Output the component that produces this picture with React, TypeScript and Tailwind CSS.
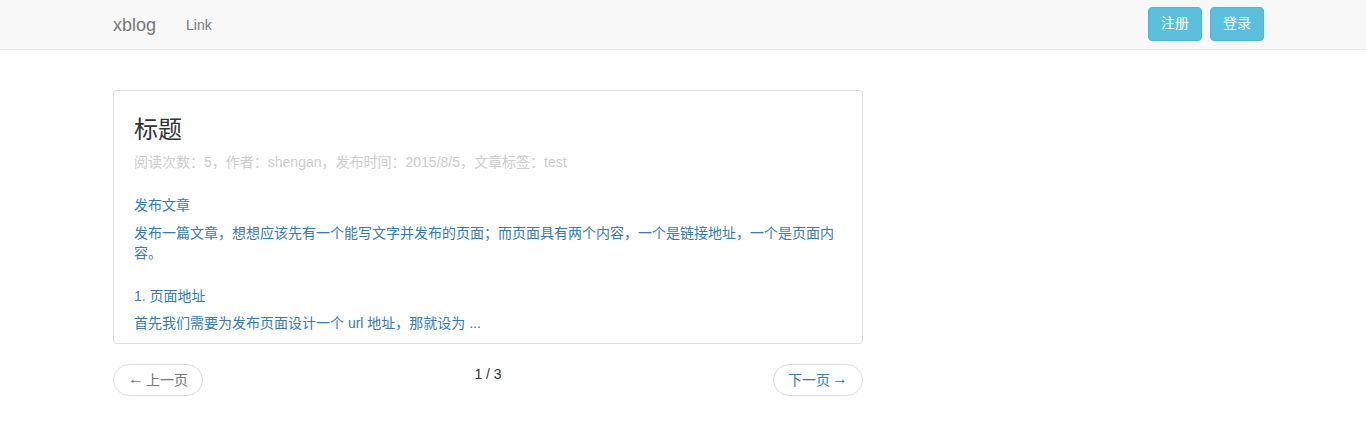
export default function App() {
  const font = { fontFamily: '"Liberation Sans", "Noto Sans CJK SC", sans-serif' };
  return (
    <div className="min-h-screen bg-white text-[14px] text-[#333]" style={font}>
      <nav className="h-[50px] border-b border-[#e7e7e7] bg-[#f8f8f8]">
        <div className="mx-auto flex h-full w-[1140px] items-center justify-between">
          <div className="flex items-center">
            <a className="text-[18px] leading-[20px] text-[#777]">xblog</a>
            <a className="ml-[30px] leading-[20px] text-[#777]">Link</a>
          </div>
          <div className="mr-[-11px] mb-[2px] flex gap-2">
            <button className="h-[34px] w-[54px] rounded border border-[#46b8da] bg-[#5bc0de] text-white">注册</button>
            <button className="h-[34px] w-[54px] rounded border border-[#46b8da] bg-[#5bc0de] text-white">登录</button>
          </div>
        </div>
      </nav>

      <main className="mx-auto w-[1140px] pt-10">
        <div className="w-[750px]">
          <div className="rounded border border-[#ddd] px-5 pb-[10px] pt-[26px]">
            <h2 className="text-[24px] leading-[26px] text-[#333]">标题</h2>
            <p className="mt-[9px] leading-5 text-[#ccc]">阅读次数：5，作者：shengan，发布时间：2015/8/5，文章标签：test</p>
            <div className="text-[#337ab7]">
              <p className="mt-[23px] leading-5">发布文章</p>
              <p className="mt-2 leading-5">
                发布一篇文章，想想应该先有一个能写文字并发布的页面；而页面具有两个内容，一个是链接地址，一个是页面内容。
              </p>
              <p className="mt-[23px] leading-5">1. 页面地址</p>
              <p className="mt-[7px] leading-5">首先我们需要为发布页面设计一个 url 地址，那就设为 ...</p>
            </div>
          </div>

          <div className="mt-5 flex items-start justify-between">
            <a className="flex h-8 w-[90px] items-center justify-center rounded-full border border-[#ddd] text-[#777]">
              <span className="mb-[2px] mr-[2px] text-[16px] leading-none">←</span>上一页
            </a>
            <span className="leading-5 text-[#333]">1 / 3</span>
            <a className="flex h-8 w-[90px] items-center justify-center rounded-full border border-[#ddd] text-[#337ab7]">
              下一页<span className="mb-[2px] ml-[2px] text-[16px] leading-none">→</span>
            </a>
          </div>
        </div>
      </main>
    </div>
  );
}
